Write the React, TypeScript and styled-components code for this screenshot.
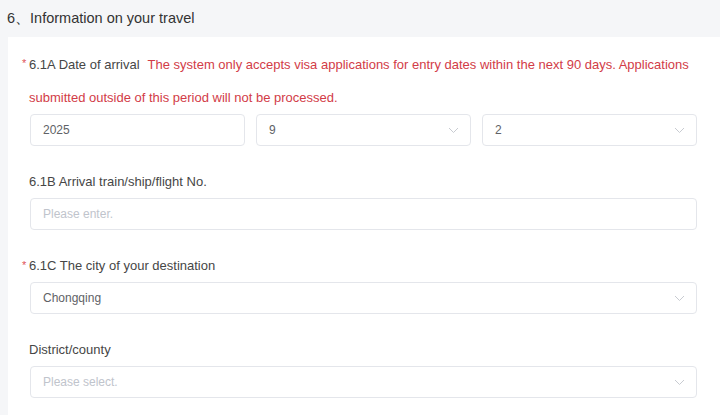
import React from 'react';
import styled, { createGlobalStyle } from 'styled-components';

const GlobalStyle = createGlobalStyle`
  html, body {
    margin: 0;
    padding: 0;
    background: #f5f6f8;
    font-family: "Liberation Sans", Arial, sans-serif;
    overflow: hidden;
  }
`;

const Page = styled.div`
  width: 720px;
  height: 415px;
  display: flex;
  flex-direction: column;
`;

// section title
const Title = styled.div`
  height: 37px;
  line-height: 37px;
  padding-left: 7px;
  font-size: 14.5px;
  color: #333;
  flex-shrink: 0;
`;

const Card = styled.div`
  flex: 1;
  margin-left: 8px;
  background: #fff;
  padding: 11px 23px 0 14px;
`;

const Item = styled.div`
  margin-bottom: 20px;
`;

const Label = styled.div<{ $required?: boolean; $tall?: boolean }>`
  position: relative;
  padding-left: 7px;
  margin-right: -20px;
  font-size: 13px;
  line-height: ${p => (p.$tall ? '33px' : '32px')};
  color: #464646;

  ${p => p.$required && `
    &::before {
      content: '*';
      position: absolute;
      left: 0;
      top: -1px;
      color: #e0525a;
      font-size: 11px;
    }
  `}
`;

const Notice = styled.span`
  color: #d23c47;
  margin-left: 8px;
`;

const Row = styled.div`
  display: grid;
  grid-template-columns: 1fr 1fr 1fr;
  gap: 11px;
  margin-left: 8px;
`;

const Field = styled.div<{ $placeholder?: boolean }>`
  height: 32px;
  box-sizing: border-box;
  border: 1px solid #e4e6eb;
  border-radius: 4px;
  display: flex;
  align-items: center;
  justify-content: space-between;
  padding: 0 11px 0 12px;
  font-size: 12px;
  color: ${p => (p.$placeholder ? '#c0c4cc' : '#606266')};
  background: #fff;
`;

const Wide = styled.div`
  margin-left: 8px;
`;

const Chevron = () => (
  <svg width="11" height="7" viewBox="0 0 11 7" fill="none">
    <path d="M1 1l4.5 4.5L10 1" stroke="#c8cbd1" strokeWidth="1" />
  </svg>
);

export default function App() {
  return (
    <>
      <GlobalStyle />
      <Page>
        <Title>6、Information on your travel</Title>
        <Card>
          <Item>
            <Label $required $tall>
              6.1A Date of arrival
              <Notice>
                The system only accepts visa applications for entry dates within the next 90 days. Applications
                submitted outside of this period will not be processed.
              </Notice>
            </Label>
            <Row>
              <Field>2025</Field>
              <Field>9<Chevron /></Field>
              <Field>2<Chevron /></Field>
            </Row>
          </Item>

          <Item>
            <Label>6.1B Arrival train/ship/flight No.</Label>
            <Wide>
              <Field $placeholder>Please enter.</Field>
            </Wide>
          </Item>

          <Item>
            <Label $required>6.1C The city of your destination</Label>
            <Wide>
              <Field>Chongqing<Chevron /></Field>
            </Wide>
          </Item>

          <Item>
            <Label>District/county</Label>
            <Wide>
              <Field $placeholder>Please select.<Chevron /></Field>
            </Wide>
          </Item>
        </Card>
      </Page>
    </>
  );
}
